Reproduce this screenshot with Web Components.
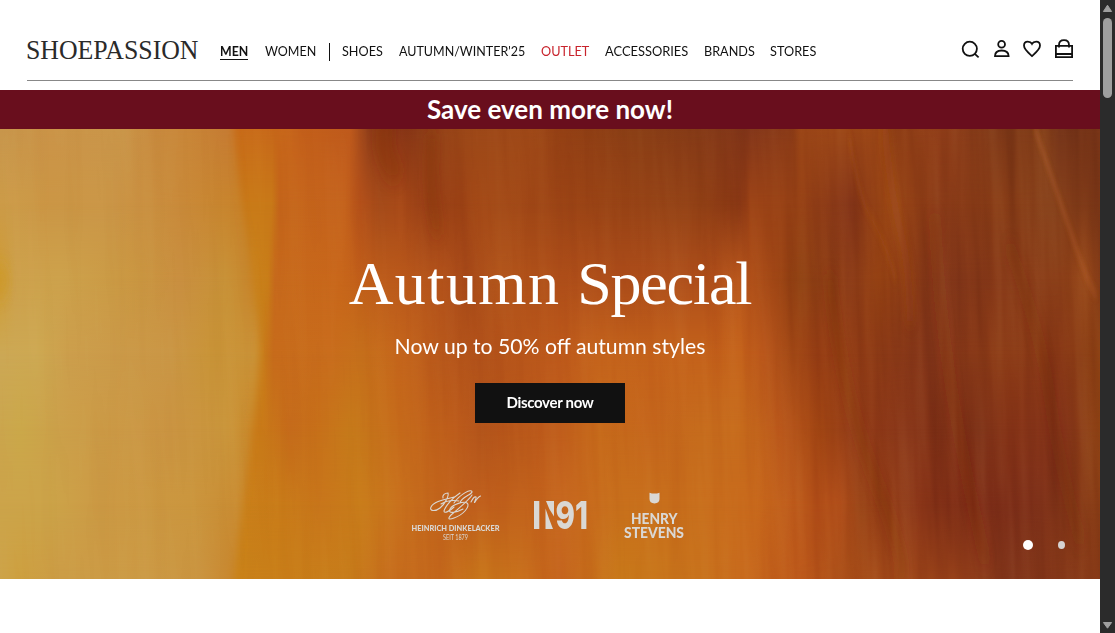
<!DOCTYPE html>
<html lang="en">
<head>
<meta charset="utf-8">
<title>Shoepassion</title>
<style>
html,body{margin:0;height:100%;overflow:hidden;background:#fff;font-family:Lato,"Liberation Sans",sans-serif;color:#111}
</style>
</head>
<body>
<shop-page></shop-page>
<script>
const define=(name,html,init)=>customElements.define(name,class extends HTMLElement{
  constructor(){super();this.attachShadow({mode:'open'}).innerHTML=html;if(init)init.call(this,this.shadowRoot);}
});

define('shop-logo',`<style>:host{display:block;width:173px;height:24px}svg{display:block;overflow:visible}</style>
<svg width="173" height="24"><text x="-1" y="20.6" font-family="Liberation Serif,serif" font-size="26.5" fill="#2a2a2a" textLength="172.5" lengthAdjust="spacingAndGlyphs">SHOEPASSION</text></svg>`);

customElements.define('nav-item',class extends HTMLElement{
  connectedCallback(){
    this.attachShadow({mode:'open'}).innerHTML=`<style>
    :host{display:block;flex:none;width:var(--w);white-space:nowrap;font-size:14px;line-height:16px;height:16px;color:#111}
    :host([active]){font-weight:700;border-bottom:1px solid #111}
    :host([sale]){color:#c8232c}
    span{display:inline-block;transform-origin:0 0;line-height:16px}</style><span><slot></slot></span>`;
    this.style.setProperty('--w',this.getAttribute('w')+'px');
    const s=this.shadowRoot.querySelector('span');
    const w=s.getBoundingClientRect().width;
    if(w)s.style.transform=`scaleX(${(+this.getAttribute('w')+.3)/w})`;
  }
});

const icons={
search:'<circle cx="9.8" cy="8.8" r="7.1"/><path d="M14.8 13.8L18.6 17.4"/>',
user:'<circle cx="9.6" cy="4.2" r="3.4"/><path d="M3 16.1C3 12.4 5.4 10.5 9.6 10.5S16.6 12.4 16.6 16.1Z"/>',
heart:'<path d="M10 16.1C6.6 13 2 9.5 2 5.6C2 3.2 3.7 1.6 5.8 1.6C7.8 1.6 9.3 2.5 10 3.8C10.7 2.5 12.2 1.6 14.2 1.6C16.4 1.6 18 3.2 18 5.6C18 9.5 13.4 13 10 16.1Z"/>',
bag:'<path d="M1.9 5.8H18.1V17.2H1.9ZM1.9 14H18.1M5 7.5V5C5 2 7 .2 10 .2S15 2 15 5V7.5"/>'};
customElements.define('shop-icon',class extends HTMLElement{
  connectedCallback(){this.attachShadow({mode:'open'}).innerHTML=`<style>:host{display:block;width:20px;height:20px}svg{display:block;overflow:visible;fill:none;stroke:#111;stroke-width:1.8}</style><svg width="20" height="20">${icons[this.getAttribute('name')]}</svg>`;}
});

define('shop-header',`<style>
:host{display:block;height:90px;background:#fff}
.bar{box-sizing:border-box;margin:0 27px;height:81px;border-bottom:1px solid #888;display:flex;align-items:flex-start}
shop-logo{margin-top:38px;flex:none}
nav{display:flex;gap:16px;margin:43px 0 0 20px}
i{width:1px;height:18px;background:#111;margin:0 -4px}
.tools{display:flex;margin:40px -1px 0 auto}
</style><div class="bar"><shop-logo></shop-logo>
<nav><nav-item active w="28">MEN</nav-item><nav-item w="51" style="margin:0 1px">WOMEN</nav-item><i></i><nav-item w="40.5">SHOES</nav-item><nav-item w="126">AUTUMN/WINTER'25</nav-item><nav-item sale w="48">OUTLET</nav-item><nav-item w="83">ACCESSORIES</nav-item><nav-item w="50.5">BRANDS</nav-item><nav-item w="46">STORES</nav-item></nav>
<div class="tools"><shop-icon name="search" style="margin-right:12px"></shop-icon><shop-icon name="user" style="margin-right:10px"></shop-icon><shop-icon name="heart" style="margin-right:12px"></shop-icon><shop-icon name="bag"></shop-icon></div></div>`);

define('promo-bar',`<style>:host{display:block;height:39px;background:#690e1d;color:#fff;text-align:center;font-weight:700;font-size:26px;line-height:39px}</style><slot></slot>`);

/* Painted backdrop: horizontal colour profiles, 75px apart, cross-faded vertically. */
const right=[
"200 c96e1a 236 c96e1a 280 c8681a 300 c4601a 350 bf5a1c 368 93401a 395 8a3617 420 8b3a16 460 9c4818 530 a04a18 560 944014 640 8a3f16 700 853a17 750 84371a 790 8c3c18 800 9b4617 880 9d4817 890 8e3e15 940 93401a 1000 7f3918 1045 85401a 1060 753419 1100 7a3618",
"200 c97a18 272 c97a18 280 c5661b 345 c4621c 360 b5521a 380 a44a19 400 a84a18 430 963e16 460 9d4315 480 a44a17 560 9e4616 600 984214 700 914015 740 8a3814 750 9c4316 800 984316 850 853619 885 994514 940 8a3b18 1000 883d17 1050 86401a 1100 7e3918",
"200 ca841c 254 ca841c 268 c97e18 275 c76a1c 340 c8661a 380 bd5c1b 440 b3521a 465 a84a19 500 b2541a 560 b0501a 620 ad4d1a 700 ae4e1a 740 b9571c 775 a04615 800 8f4113 850 91401a 880 984414 940 83371a 1000 883a18 1060 8a3e18 1085 974719 1100 853c17",
"200 c97e1a 262 c97e1a 274 c76b1b 330 c86c1c 360 c6701b 400 c5661c 440 b8581b 480 b2521a 560 be5a1b 600 c5641c 700 c4621b 740 c5641c 765 b9561b 790 a44a16 820 983f15 870 8f3c16 930 85371a 1000 8c3c17 1060 883816 1100 8c4114",
"200 c97a18 262 c97a18 290 c66c1b 320 c8721a 350 c67a1a 400 c66b1b 455 bd5c1b 480 b3541a 520 ba591b 560 bf5c1b 600 c76b1b 650 c5661c 700 c66c1d 745 c76c1d 780 b9561a 820 a44814 850 933c17 910 873518 980 7d3117 1010 873417 1060 85341a 1100 8e4214",
"200 ca801a 243 ca801a 280 c97c19 320 c8761b 360 c87c1a 400 c8701c 470 bf5e1c 520 c2631c 560 c5641c 620 c8701c 700 c86e1c 755 c8691c 790 bd5a1a 840 b04e1a 860 984216 920 8a3518 990 7b2c17 1040 80321a 1100 8a3e16",
"200 c98218 236 c98218 290 c97e19 350 c77c1a 390 c66c1c 440 c4681c 480 c8761a 520 c8701c 560 c4621c 620 c87819 700 c8721c 745 c86a1d 800 bd591b 850 a84e18 900 a0481a 960 95401a 1010 80341a 1100 8a3c18"];
const left=[
"0 c8964c 50 cb9448 120 ca964a 150 c98c40 190 c98638 225 c67c33 260 c67c33",
"0 cc9b48 50 cb9645 110 cb9748 180 c98a3a 235 c8842c",
"0 cf9c35 15 cda04a 60 cda24c 140 ca9742 180 c98f40 225 c89238 252 c8862c",
"0 cca855 40 cda852 70 cc9e4c 170 ca9645 210 c99438 252 ca9338",
"0 cba64e 20 cba84a 60 cca04a 100 cc9b47 170 ca9442 225 ca963c 250 c98a2c",
"0 cca44a 50 cca449 100 cc9a45 190 cb963e 236 c98c33",
"0 cda348 20 cda040 60 cc9c46 150 cc9a45 200 ca9440 230 c98830"];
const rows=(set,id)=>set.map((r,i)=>{
  const t=r.split(' ');let s='';
  for(let k=0;k<t.length;k+=2)s+=`<stop offset="${t[k]/1100}" stop-color="#${t[k+1]}"/>`;
  const y=i?(i-1)*75:0;
  return `<linearGradient id="${id}${i}" gradientUnits="userSpaceOnUse" x1="0" x2="1100" y1="0" y2="0">${s}</linearGradient>
  <rect x="0" y="${y}" width="1100" height="${450-y}" fill="url(#${id}${i})" ${i?`mask="url(#m${i})"`:''}/>`;
}).join('');
const masks=[1,2,3,4,5,6].map(i=>`<linearGradient id="f${i}" gradientUnits="userSpaceOnUse" x1="0" x2="0" y1="${i*75-75}" y2="${i*75}"><stop stop-color="#fff" stop-opacity="0"/><stop offset="1" stop-color="#fff"/></linearGradient><mask id="m${i}" maskUnits="userSpaceOnUse" x="0" y="0" width="1100" height="450" style="mask-type:alpha"><rect width="1100" height="450" fill="url(#f${i})"/></mask>`).join('');
define('autumn-backdrop',`<style>:host{display:block;width:1100px;height:450px}svg{display:block}</style>
<svg width="1100" height="450"><defs>${masks}
<filter id="b3" x="-50%" width="200%" y="-20%" height="140%"><feGaussianBlur stdDeviation="3.5 8"/></filter>
<filter id="b1" x="-100%" width="300%" y="-20%" height="140%"><feGaussianBlur stdDeviation="3 8"/></filter>
<filter id="b0" x="-100%" width="300%" y="-20%" height="140%"><feGaussianBlur stdDeviation="1.5 4"/></filter>
<mask id="lm" maskUnits="userSpaceOnUse" x="0" y="0" width="1100" height="450"><path filter="url(#b3)" fill="#fff" d="M-60-60H233V0C235 30 240 60 244 90C250 120 252 150 256 180C262 215 258 260 251 310C246 350 240 390 234 450V510H-60Z"/></mask>
<filter id="n" x="0" y="0" width="100%" height="100%" color-interpolation-filters="sRGB"><feTurbulence type="fractalNoise" baseFrequency=".06 .004" numOctaves="3" seed="8"/><feColorMatrix values="1.2 0 0 0 -.13  1.2 0 0 0 -.13  1.2 0 0 0 -.13  0 0 0 0 1"/></filter>
<linearGradient id="fade"><stop offset="0" stop-color="#fff" stop-opacity=".05"/><stop offset=".3" stop-color="#fff" stop-opacity=".07"/><stop offset=".65" stop-color="#fff" stop-opacity=".12"/><stop offset=".8" stop-color="#fff" stop-opacity=".2"/><stop offset="1" stop-color="#fff" stop-opacity=".2"/></linearGradient>
<mask id="nm" maskUnits="userSpaceOnUse" x="0" y="0" width="1100" height="450" style="mask-type:alpha"><rect width="1100" height="450" fill="url(#fade)"/></mask></defs>
${rows(right,'r')}<g mask="url(#lm)">${rows(left,'l')}</g>
<g fill="none" stroke-linecap="round" filter="url(#b1)">
<path d="M385-5Q380 20 393 42" stroke="#81310f" stroke-width="20" opacity=".3"/>
<path d="M432 10Q428 60 437 100" stroke="#87350f" stroke-width="13" opacity=".2"/>
<path d="M885 0Q890 60 900 100T910 190" stroke="#a95117" stroke-width="7" opacity=".3"/>
<path d="M935 90Q938 170 950 250T985 430" stroke="#792e18" stroke-width="12" opacity=".2"/>
<path d="M1010 120Q1040 200 1050 270T1080 410" stroke="#75301a" stroke-width="12" opacity=".15"/>
<path d="M830 150Q840 260 875 350T900 450" stroke="#7e3510" stroke-width="11" opacity=".22"/>
<ellipse cx="0" cy="152" rx="9" ry="16" fill="#cd9a28" opacity=".6"/>
</g>
<g fill="none" stroke-linecap="round" filter="url(#b0)">
<path d="M850 10Q860 75 872 90Q888 120 895 150" stroke="#b25b20" stroke-width="2.5" opacity=".35"/>
<path d="M1035 0Q1056 60 1073 110T1096 165" stroke="#c0662d" stroke-width="3" opacity=".42"/>
</g>
<g mask="url(#nm)" style="mix-blend-mode:soft-light"><rect x="-120" y="-60" width="1340" height="570" transform="skewX(2)" filter="url(#n)"/></g></svg>`);

define('brand-logos',`<style>:host{display:flex;width:275px;height:52px}svg{display:block;overflow:visible}text{font-family:Lato,sans-serif;fill:#dad8d4}</style>
<svg width="275" height="52" fill="#dad8d4"><g fill="none" stroke="#dad8d4" stroke-width="1.1" stroke-linecap="round">
<path d="M32 8C31 5 34 3 37 3C38 6 34 14 29 18C24 22 18 21 20 17C22 12 31 10 43 7M49 3C41 8 34 17 33 21C33 24 39 21 43 17M30 14Q38 9 48 11"/>
<path d="M61 5C58 10 46 20 40 25C36 29 38 30 43 28C52 25 60 16 56 13C53 11 42 14 39 19C36 24 45 23 52 19M43 13C49 4 61-2 61 2C60 5 50 7 49 13M60 12Q63 6 65 7C66 8 62 14 64 12Q67 7 69.5 6"/></g>
<text x=".5" y="41.3" font-size="7.8" font-weight="900" textLength="88" lengthAdjust="spacingAndGlyphs">HEINRICH DINKELACKER</text>
<text x="32" y="50" font-size="6.6" textLength="25" lengthAdjust="spacingAndGlyphs">SEIT 1879</text>
<path d="M123 11H128.3V39H123ZM135 11H143V26.5Q138 20 135 11ZM134.5 18.5Q138 29 142 39H134.5Z"/>
<text x="144.5" y="39" font-size="38.5" font-weight="800" textLength="32.5" lengthAdjust="spacingAndGlyphs" style="font-family:Inter,sans-serif">91</text>
<path d="M238.5 2.7Q243.5 4.5 248.5 2.7V9Q248.5 13 243.5 13.5Q238.5 13 238.5 9Z"/>
<text x="220" y="33.7" font-size="14.3" font-weight="900" textLength="46.5" lengthAdjust="spacingAndGlyphs">HENRY</text>
<text x="213" y="47.7" font-size="14.3" font-weight="900" textLength="60" lengthAdjust="spacingAndGlyphs">STEVENS</text></svg>`);

define('hero-slide',`<style>
:host{display:grid;height:450px;width:1100px}
autumn-backdrop,.content,.dots{grid-area:1/1}
.content{z-index:1;display:flex;flex-direction:column;align-items:center;color:#fff}
h1{margin:118px 0 0;font:400 62px/72px "Liberation Serif",serif;height:72px;white-space:nowrap}
.w1{letter-spacing:1.4px}.w2{letter-spacing:-1.2px}
p{margin:13px 0 0;font-size:21.2px;line-height:28px;white-space:nowrap}
button{margin:23px 0 0;width:150px;height:40px;padding:0 0 1px;border:0;background:#111;color:#fff;font:700 15px/39px Lato,sans-serif;letter-spacing:-.3px}
brand-logos{margin:67px 0 0 -3px}
.dots{z-index:2;align-self:end;justify-self:end;display:flex;align-items:center;gap:25px;margin:0 35px 29px 0}
b{display:block;width:10px;height:10px;border-radius:50%;background:#fff}b+b{width:7px;height:8px;background:#d6d3d2}
</style><autumn-backdrop></autumn-backdrop><div class="content"><h1><span class="w1">Autumn </span><span class="w2">Special</span></h1><p>Now up to 50% off autumn styles</p><button>Discover now</button><brand-logos></brand-logos></div><div class="dots"><b></b><b></b></div>`);

define('page-scrollbar',`<style>:host{display:block;width:15px;height:633px;background:#2b2b2b}svg{display:block}</style>
<svg width="15" height="633" fill="#9f9f9f"><path d="M7.5 5.2L11.6 11.5H3.4Z" stroke="#9f9f9f" stroke-linejoin="round" stroke-width="1"/><rect x="3" y="18" width="9" height="80" rx="4.5"/><path d="M7.5 628.2L11.6 622.5H3.4Z" stroke="#9f9f9f" stroke-linejoin="round" stroke-width="1"/></svg>`);

define('shop-page',`<style>:host{display:grid;grid-template-columns:1100px 15px;height:633px;overflow:hidden}</style>
<main><shop-header></shop-header><promo-bar>Save even more now!</promo-bar><hero-slide></hero-slide></main><page-scrollbar></page-scrollbar>`);
</script>
</body>
</html>
